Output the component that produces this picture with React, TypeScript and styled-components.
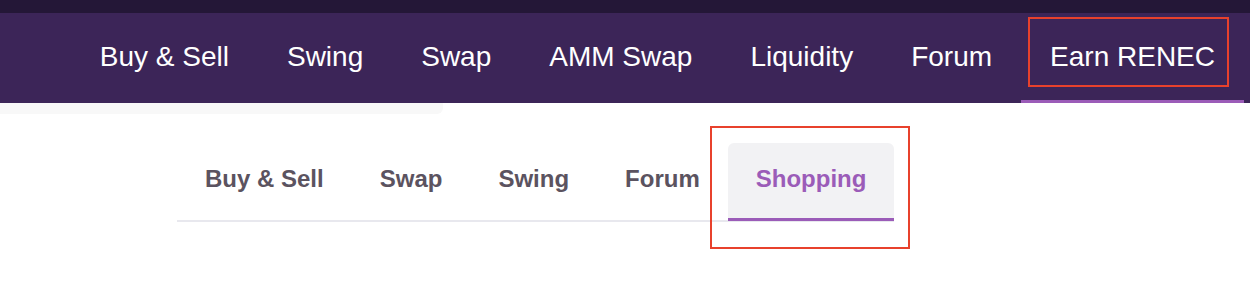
import React from 'react'
import styled, { createGlobalStyle } from 'styled-components'

const GlobalStyle = createGlobalStyle`
  html, body {
    margin: 0;
    padding: 0;
    background: #fff;
    font-family: 'Liberation Sans', Arial, sans-serif;
  }
`

const Page = styled.div`
  width: 1250px;
  height: 306px;
  overflow: hidden;
  background: #fff;
`

const TopStrip = styled.div`
  height: 13px;
  background-color: #241737;
`

const Header = styled.header`
  height: 90px;
  background-color: #3c2558;

  display: flex;
  justify-content: flex-end;
  align-items: stretch;
  padding-right: 6px;
`

type ActiveProps = {
  $active?: boolean
}

const NavItem = styled.a<ActiveProps>`
  position: relative;
  display: flex;
  align-items: center;
  padding: 0 29px;

  font-size: 28px;
  color: #fff;
  text-decoration: none;
  white-space: nowrap;

  border-bottom: 3px solid ${(props) => (props.$active ? '#9b5cb8' : 'transparent')};

  :hover {
    cursor: pointer;
  }
`

const HeaderShadow = styled.div`
  width: 443px;
  height: 11px;
  background-color: #f8f8f8;
  border-radius: 0 0 6px 0;
`

const SubSection = styled.div`
  padding: 29px 0 0 177px;
`

const TabList = styled.div`
  display: inline-flex;
  align-items: flex-end;
  border-bottom: 2px solid #e8e8ee;
`

const Tab = styled.a<ActiveProps>`
  position: relative;
  padding: 22px 28px 25px;
  margin-bottom: -1px;

  font-size: 24px;
  font-weight: 700;
  color: ${(props) => (props.$active ? '#9b5cb8' : '#5b5360')};
  background-color: ${(props) => (props.$active ? '#f2f2f4' : 'transparent')};
  border-radius: 6px 6px 0 0;
  border-bottom: 3px solid ${(props) => (props.$active ? '#9b5cb8' : 'transparent')};
  white-space: nowrap;

  :hover {
    cursor: pointer;
  }
`

type MarkProps = {
  $left: number
  $top: number
  $width: number
  $height: number
}

const Highlight = styled.span<MarkProps>`
  position: absolute;
  left: ${(props) => props.$left}px;
  top: ${(props) => props.$top}px;
  width: ${(props) => props.$width}px;
  height: ${(props) => props.$height}px;
  box-sizing: border-box;
  border: 2px solid #e8412c;
  pointer-events: none;
`

const mainLinks = ['Buy & Sell', 'Swing', 'Swap', 'AMM Swap', 'Liquidity', 'Forum', 'Earn RENEC']
const subLinks = ['Buy & Sell', 'Swap', 'Swing', 'Forum', 'Shopping']

export default function App() {
  return (
    <Page>
      <GlobalStyle />
      <TopStrip />
      <Header>
        {mainLinks.map((label) => {
          const active = label === 'Earn RENEC'
          return (
            <NavItem key={label} $active={active}>
              {label}
              {active && <Highlight $left={7} $top={4} $width={201} $height={70} />}
            </NavItem>
          )
        })}
      </Header>
      <HeaderShadow />
      <SubSection>
        <TabList>
          {subLinks.map((label) => {
            const active = label === 'Shopping'
            return (
              <Tab key={label} $active={active}>
                {label}
                {active && <Highlight $left={-18} $top={-17} $width={200} $height={123} />}
              </Tab>
            )
          })}
        </TabList>
      </SubSection>
    </Page>
  )
}
